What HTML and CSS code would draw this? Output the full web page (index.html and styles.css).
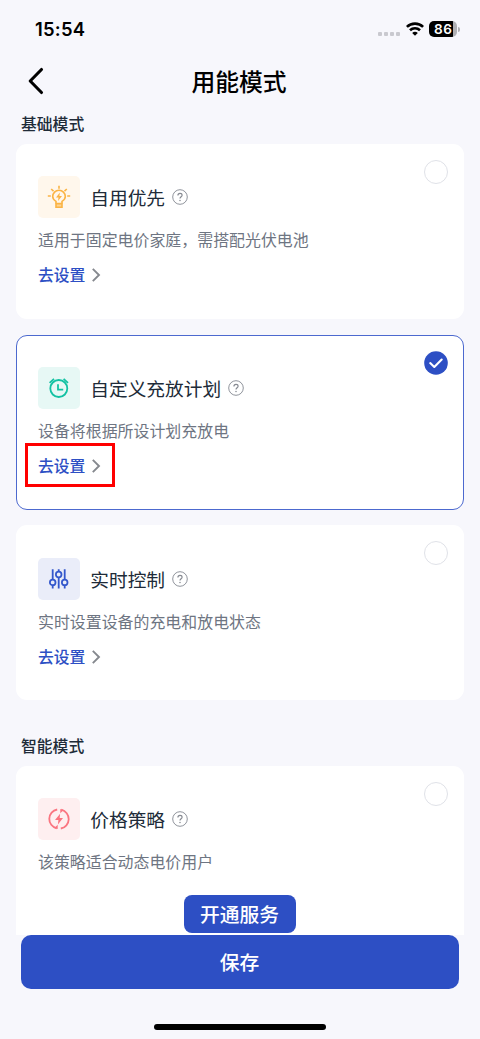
FILE: index.html
```html
<!DOCTYPE html>
<html lang="zh-CN">
<head>
<meta charset="utf-8">
<title>用能模式</title>
<link rel="stylesheet" href="styles.css">
</head>
<body>
<svg class="defs" width="0" height="0">
  <symbol id="help" viewBox="0 0 16 16"><circle cx="8" cy="8" r="7.3" fill="none" stroke="#90949c" stroke-width="1"/><path d="M5.9 6.4C5.9 5 6.8 4.3 8 4.3s2.1.8 2.1 1.9c0 1.5-2.1 1.6-2.1 3.3" fill="none" stroke="#858991" stroke-width="1.15"/><circle cx="8" cy="11.4" r=".75" fill="#858991"/></symbol>
  <symbol id="chev" viewBox="0 0 10 16"><path d="M1.8 1.8 8 8l-6.2 6.2" fill="none" stroke="#85888e" stroke-width="1.9"/></symbol>
</svg>
<div class="screen">
  <header class="status">
    <span class="time">15:54</span>
    <div class="indicators">
      <div class="dots"><i></i><i></i><i></i><i></i></div>
      <svg class="wifi" width="18" height="14" viewBox="0 0 18 14"><g fill="none" stroke="#000" stroke-width="2.6"><path d="M.9 4.9C5.4.5 12.6.5 17.1 4.9"/><path d="M4 8.2c2.8-2.7 7.2-2.7 10 0"/></g><path d="M9 13.7 6.2 10.9c1.5-1.5 4.1-1.5 5.6 0z"/></svg>
      <div class="battery"><span>86</span></div><i class="nub"></i>
    </div>
  </header>
  <nav class="nav">
    <svg class="back" width="18" height="28" viewBox="0 0 18 28"><path d="M14.5 2.5 3.2 14l11.3 11.5" fill="none" stroke="#000" stroke-width="3.1" stroke-linecap="round" stroke-linejoin="round"/></svg>
    <h1>用能模式</h1>
  </nav>
  <main class="content">
    <h2>基础模式</h2>
    <section class="card">
      <i class="radio"></i>
      <div class="head"><div class="tile amber"><svg width="24" height="24" viewBox="0 0 24 24" fill="none" stroke="#fbb445" stroke-width="1.6"><path d="M12 .8v3M4.2 4l2.3 2.2M19.8 4l-2.3 2.2M.8 11h3M20.2 11h3"/><path d="M9 18.5v-2.1C6.9 15.2 5.7 13.6 5.7 11.6a6.3 6.3 0 0 1 12.6 0c0 2-1.2 3.6-3.3 4.8v2.1"/><path d="M9 18.6h6v3.6H9z" fill="#fdd595"/><path d="M12.9 7.6 9 12.5h2.5l-.5 3.4 4-5h-2.6z" fill="#fbb445" stroke="none"/></svg></div><h3>自用优先</h3><svg class="help"><use href="#help"/></svg></div>
      <p>适用于固定电价家庭，需搭配光伏电池</p>
      <a class="link">去设置<svg><use href="#chev"/></svg></a>
    </section>
    <section class="card selected">
      <svg class="check" width="24" height="24" viewBox="0 0 24 24"><circle cx="12" cy="12" r="11.8" fill="#2d4fc4"/><path d="m6.2 12.1 4.1 3.9 7.4-7.5" fill="none" stroke="#fff" stroke-width="2.1" stroke-linecap="round" stroke-linejoin="round"/></svg>
      <div class="head"><div class="tile green"><svg width="24" height="24" viewBox="0 0 24 24" fill="none" stroke="#13c2a3" stroke-width="1.8"><circle cx="11.8" cy="12.5" r="8.5"/><path d="M11 8.2v5.4h5.2M2.6 6.8 7 2.9M21 6.8l-4.4-3.9"/></svg></div><h3>自定义充放计划</h3><svg class="help"><use href="#help"/></svg></div>
      <p>设备将根据所设计划充放电</p>
      <a class="link">去设置<svg><use href="#chev"/></svg></a>
      <div class="highlight"></div>
    </section>
    <section class="card third">
      <i class="radio"></i>
      <div class="head"><div class="tile blue"><svg width="24" height="24" viewBox="0 0 24 24" fill="none" stroke="#3458cc" stroke-width="1.8"><path d="M5.7 2.3v10.4M5.7 18v3.5M11.7 2.3v2.4M11.7 10.2v11.3M17.7 2.3v10.4M17.7 18v3.5"/><circle cx="5.7" cy="15.4" r="2.8"/><circle cx="11.7" cy="7.5" r="2.8"/><circle cx="17.7" cy="15.4" r="2.8"/></svg></div><h3>实时控制</h3><svg class="help"><use href="#help"/></svg></div>
      <p>实时设置设备的充电和放电状态</p>
      <a class="link">去设置<svg><use href="#chev"/></svg></a>
    </section>
    <h2 class="smart">智能模式</h2>
    <section class="card last">
      <i class="radio"></i>
      <div class="head"><div class="tile red"><svg width="24" height="24" viewBox="0 0 24 24" fill="none" stroke="#fa7580" stroke-width="1.8"><path d="M10.2 2.5a9.6 9.6 0 0 0-.5 18.8M13.8 21.5a9.6 9.6 0 0 0 .5-18.8"/><path d="M10.7 22V17.7L7.4 21zM13.3 2v4.3L16.6 3z" fill="#fa7580" stroke="none"/><path d="M13.1 6.7 8 13h3.4l-.5 4.4 5.1-6.5h-3.3z" fill="#fa7580" stroke="none"/></svg></div><h3>价格策略</h3><svg class="help"><use href="#help"/></svg></div>
      <p>该策略适合动态电价用户</p>
      <button class="service">开通服务</button>
    </section>
  </main>
  <footer><button class="save">保存</button><div class="home"></div></footer>
</div>
</body>
</html>
```

FILE: styles.css
```css
* { box-sizing: border-box; }
body { margin: 0; background: #f7f7fc; font-family: "Noto Sans CJK SC", sans-serif; color: #202b38; }
.defs { position: absolute; }
.screen { width: 480px; height: 1039px; overflow: hidden; display: flex; flex-direction: column; background: #f7f7fc; }
h1, h2, h3, p { margin: 0; }
i { display: block; }
button { border: 0; padding: 0; font-family: inherit; color: #fff; background: #2d4fc4; font-weight: 500; }

.status { height: 58px; padding: 0 20px 0 35px; display: flex; align-items: center; justify-content: space-between; }
.time { font: 600 18.4px/24px Inter, sans-serif; color: #000; letter-spacing: .25px; }
.indicators { display: flex; align-items: center; }
.dots { display: flex; gap: 2px; padding-top: 9px; margin-right: 6px; }
.dots i { width: 4px; height: 4px; border-radius: 1px; background: #c9c9cf; }
.wifi { margin-right: 5px; }
.battery { width: 28px; height: 16px; border-radius: 5px; background: linear-gradient(90deg, #000 24px, #b0b0b4 24px); }
.battery span { display: block; padding-left: 5px; font: 600 13.6px/16px Inter, sans-serif; letter-spacing: .5px; color: #fff; }
.nub { width: 2px; height: 5px; margin-left: 1px; border-radius: 0 2px 2px 0; background: #b0b0b4; }

.nav { height: 46px; display: grid; grid-template-columns: 100px 1fr 102px; align-items: center; }
.back { margin-left: 27px; }
.nav h1 { text-align: center; font-size: 23.8px; line-height: 36px; font-weight: 500; color: #000; }

.content { height: 831px; padding: 8px 16px 0; overflow: hidden; }
h2 { height: 24px; margin: 0 0 8px 5px; font-size: 15.8px; line-height: 24px; font-weight: 500; }
h2.smart { margin-top: 34px; }
.card { position: relative; height: 175px; margin-bottom: 15.7px; padding: 32px 22px 0; border-radius: 11px; background: #fff; display: flex; flex-direction: column; align-items: flex-start; }
.selected { border: 1.3px solid #4c69cf; padding: 31px 21px 0; }
.third { padding-top: 32.6px; }
.last { height: 200px; border-radius: 11px 11px 0 0; }
.radio { position: absolute; right: 16px; top: 16px; width: 24px; height: 24px; border: 1.5px solid #e0e2e8; border-radius: 50%; }
.check { position: absolute; right: 15px; top: 15px; }
.head { display: flex; align-items: center; height: 42px; }
.tile { width: 42px; height: 42px; border-radius: 5px; display: flex; align-items: center; justify-content: center; }
.amber { background: #fff7ec; }
.green { background: #e7f8f5; }
.blue { background: #eaedf9; }
.red { background: #feeff0; }
h3 { margin-left: 10.3px; font-size: 18.7px; line-height: 28px; font-weight: 400; }
.help { width: 16px; height: 16px; margin-left: 7px; }
.card p { margin-top: 10px; font-size: 15.93px; line-height: 24px; color: #6e7582; white-space: nowrap; }
.link { display: flex; align-items: center; margin-top: 11px; height: 24px; font-size: 15.8px; line-height: 24px; font-weight: 500; color: #2d4fc4; }
.link svg { width: 10px; height: 16px; margin-left: 6px; }
.highlight { position: absolute; left: 8px; top: 107px; width: 90px; height: 44px; border: 3px solid #f00; }
.service { align-self: center; width: 112px; height: 38px; margin-top: 21px; padding-right: 1px; border-radius: 8px; font-size: 19.8px; line-height: 38px; }

footer { height: 104px; display: flex; flex-direction: column; align-items: center; }
.save { width: 438px; height: 54px; padding-right: 1px; border-radius: 10px; font-size: 19.8px; line-height: 54px; }
.home { width: 172px; height: 6px; margin-top: 35px; border-radius: 3px; background: #000; }
```
